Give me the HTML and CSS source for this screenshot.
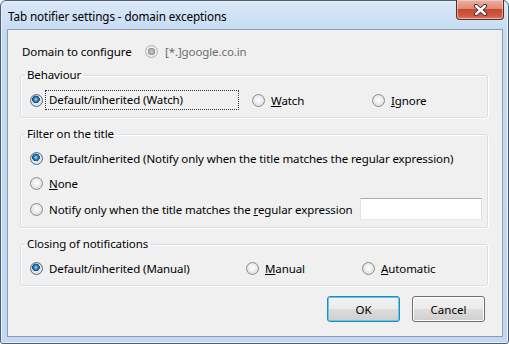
FILE: index.html
```html
<!DOCTYPE html>
<html lang="en">
<head>
    <meta charset="UTF-8">
    <title>Tab notifier settings - domain exceptions</title>
    <link rel="stylesheet" href="styles.css">
</head>
<body>
    <div class="window">
        <div class="titlebar">
            <span class="title">Tab notifier settings - domain exceptions</span>
            <button class="close-btn" type="button">
                <svg width="15" height="12" viewBox="0 0 15 12">
                    <path d="M3 2 L12 10 M12 2 L3 10" stroke="#4a2420" stroke-width="4.2" stroke-linecap="round"/>
                    <path d="M3 2 L12 10 M12 2 L3 10" stroke="#ffffff" stroke-width="2.4" stroke-linecap="round"/>
                </svg>
            </button>
        </div>
        <div class="client">
            <div class="domain-row">
                <span class="domain-label">Domain to configure</span>
                <span class="radio disabled"></span>
                <span class="domain-value">[*.]google.co.in</span>
            </div>

            <fieldset class="group">
                <legend>Behaviour</legend>
                <div class="choice-row behaviour-cols">
                    <label class="option"><span class="radio checked"></span><span class="focus-label">Default/inherited (Watch)</span></label>
                    <label class="option"><span class="radio"></span><span><u>W</u>atch</span></label>
                    <label class="option"><span class="radio"></span><span><u>I</u>gnore</span></label>
                </div>
            </fieldset>

            <fieldset class="group group-tight">
                <legend>Filter on the title</legend>
                <div class="filter-list">
                    <label class="option"><span class="radio checked"></span><span>Default/inherited (Notify only when the title matches the regular expression)</span></label>
                    <label class="option"><span class="radio"></span><span><u>N</u>one</span></label>
                    <div class="option regex-row">
                        <span class="radio"></span>
                        <span>Notify only when the title matches the <u>r</u>egular expression</span>
                        <input class="text-field" type="text">
                    </div>
                </div>
            </fieldset>

            <fieldset class="group group-tight">
                <legend>Closing of notifications</legend>
                <div class="choice-row closing-cols">
                    <label class="option"><span class="radio checked"></span><span>Default/inherited (Manual)</span></label>
                    <label class="option"><span class="radio"></span><span><u>M</u>anual</span></label>
                    <label class="option"><span class="radio"></span><span><u>A</u>utomatic</span></label>
                </div>
            </fieldset>

            <div class="buttons">
                <button class="btn btn-default" type="button">OK</button>
                <button class="btn" type="button">Cancel</button>
            </div>
        </div>
    </div>
</body>
</html>
```

FILE: styles.css
```css
html, body {
    margin: 0;
    padding: 0;
    background-color: #ffffff;
}

body {
    font-family: "Noto Sans", "Open Sans", sans-serif;
    font-size: 11.5px;
    letter-spacing: -0.1px;
    color: #000;
}

.window {
    width: 509px;
    height: 344px;
    box-sizing: border-box;
    border: 1px solid #4f5d6e;
    border-radius: 6px 6px 3px 3px;
    background: linear-gradient(to bottom, #dbe9f8 0, #c6dbf2 30px, #c4d9f1 100%);
    padding: 0 5px 6px 6px;
    display: flex;
    flex-direction: column;
    box-shadow: inset 0 0 0 1px #e8f1fb;
}

.titlebar {
    height: 28px;
    display: flex;
    align-items: flex-start;
    justify-content: space-between;
    margin-right: -1px;
}

.title {
    line-height: 16px;
    margin-top: 7px;
    padding-left: 1px;
    font-size: 11.7px;
    color: #000;
}

.close-btn {
    width: 48px;
    height: 20px;
    margin-top: -1px;
    border: 1px solid #5b2b26;
    border-top: none;
    border-radius: 0 0 4px 4px;
    background: linear-gradient(to bottom, #eab1a4 0, #de8a77 45%, #c7472f 50%, #cf5d43 85%, #e0866b 100%);
    box-shadow: inset 0 0 0 1px rgba(255, 220, 210, 0.55);
    display: flex;
    align-items: center;
    justify-content: center;
    padding: 0;
}

.client {
    flex: 1;
    border: 1px solid #8a9cb0;
    background-color: #f0f0f0;
    padding: 13px 14px 0 12px;
    display: flex;
    flex-direction: column;
}

.domain-row {
    height: 16px;
    display: flex;
    align-items: center;
    padding-left: 2px;
    margin-bottom: 8px;
}

.domain-label {
    width: 123px;
}

.domain-value {
    margin-left: 7px;
    color: #6d6d6d;
}

/* radio buttons drawn like the classic themed control */
.radio {
    width: 13px;
    height: 13px;
    box-sizing: border-box;
    border-radius: 50%;
    border: 1px solid #8c8c8c;
    background: radial-gradient(circle at 50% 45%, #ffffff 0, #f1f1f1 35%, #d2d2d2 100%);
    flex: none;
}

.radio.checked {
    border-color: #4d6e8f;
    background:
        radial-gradient(circle at 45% 40%, #b6e6fb 0, #3b9ad6 1.5px, #1a5d99 3px, #24476a 3.6px, transparent 4.1px),
        radial-gradient(circle at 50% 45%, #ffffff 0, #ececec 40%, #cfcfcf 100%);
}

.radio.disabled {
    border-color: #b3b3b3;
    background:
        radial-gradient(circle, #c9c9c9 0, #a8a8a8 2.6px, #8e8e8e 3.4px, transparent 4px),
        radial-gradient(circle, #fafafa 0, #ececec 60%, #dedede 100%);
}

.group {
    margin: 0 0 8px 0;
    padding: 7px 5px 7px 9px;
    border: 1px solid #d5dfe5;
    border-radius: 3px;
    box-shadow: inset 1px 1px 0 #ffffff, 1px 1px 0 #ffffff;
}

.group-tight {
    padding-top: 6px;
}

.group legend {
    padding: 0 2px;
    margin-left: -5px;
    line-height: 16px;
}

.option {
    display: flex;
    align-items: center;
    gap: 6px;
    height: 20px;
    white-space: nowrap;
}

.choice-row {
    display: grid;
    align-items: center;
}

.behaviour-cols {
    grid-template-columns: 222px 120px auto;
}

.closing-cols {
    grid-template-columns: 216px 116px auto;
}

.behaviour-cols .option:first-child {
    gap: 2px;
}

.focus-label {
    width: 194px;
    height: 20px;
    box-sizing: border-box;
    border: 1px dotted #333;
    padding: 0 3px;
    line-height: 18px;
}

.filter-list {
    display: flex;
    flex-direction: column;
    gap: 5px;
}

.regex-row {
    height: 22px;
}

.text-field {
    margin-left: auto;
    width: 122px;
    height: 22px;
    box-sizing: border-box;
    border: 1px solid #abadb3;
    border-color: #abadb3 #dbdfe6 #e3e9ef #e2e3ea;
    background: #fff;
    padding: 2px 3px;
    font: inherit;
    flex: none;
}

.buttons {
    display: flex;
    justify-content: flex-end;
    gap: 12px;
    margin-top: 2px;
    margin-right: 3px;
}

.btn {
    width: 73px;
    height: 26px;
    box-sizing: border-box;
    border: 1px solid #707070;
    border-radius: 3px;
    background: linear-gradient(to bottom, #f2f2f2 0, #ebebeb 50%, #dddddd 50%, #cfcfcf 100%);
    box-shadow: inset 0 0 0 1px #fcfcfc;
    font: inherit;
    color: #000;
    padding: 0;
}

.btn-default {
    border-color: #3c7fb1;
    box-shadow: inset 0 0 0 1px #48d3ff;
}
```
